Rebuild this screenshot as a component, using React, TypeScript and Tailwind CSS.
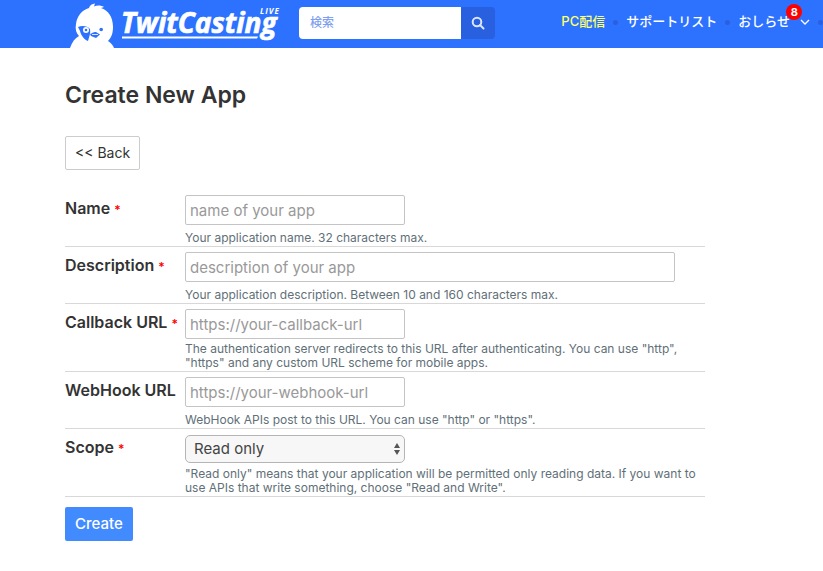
import type { ReactNode } from "react";

type RowProps = {
  id: string;
  label: string;
  required?: boolean;
  hint: string;
  twoLines?: boolean;
  children: ReactNode;
};

function Row({ id, label, required, hint, twoLines, children }: RowProps) {
  return (
    <div className="flex border-b border-[#d8d8d8] pt-[5px] pb-px">
      <label htmlFor={id} className="w-[120px] shrink-0 pt-px text-base leading-6 font-semibold whitespace-nowrap text-[#333]">
        {label}
        {required && <span className="ml-1 text-xs text-[#f00]">*</span>}
      </label>
      <div className="min-w-0 flex-1">
        {children}
        <p className={`text-xs leading-[14px] text-[#5f7078] ${twoLines ? "pt-[3px]" : "pt-1.5"}`}>{hint}</p>
      </div>
    </div>
  );
}

const field =
  "block h-[30px] max-w-full rounded-xs border border-[#c4c4c4] bg-white px-1 text-[15px] text-[#333] placeholder:text-[#999]";

function Logo() {
  return (
    <a href="#" aria-label="TwitCasting LIVE" className="block shrink-0">
      <svg width="216" height="48" viewBox="0 0 216 48" fill="#fff">
        <path d="M2 48C4 42 7 38 11 36C8 33 7 29 8 24C9 16 14 10 21 8C22 5 24 4 27 3.5L26 6.5C29 5 33 5 36 7L33 8C40 10 45 17 45 27C45 34 43 38 40 41C43 43 45 45 46 48Z" />
        <path d="M10 27C14 25 20 26 22 29C23 33 21 37 20 41C17 40 13 36 12 31Z" fill="#2d72ff" />
        <circle cx="18" cy="30" r="3" />
        <circle cx="18" cy="30" r="1.3" fill="#2d72ff" />
        <circle cx="33.2" cy="29.5" r="1.8" fill="#2d72ff" />
        <path d="M22 34C24 33 26 31.5 28 32L32 34.5L28 38L23 36Z" fill="#2d72ff" />
        <path d="M24 34.5L30 34.5" stroke="#fff" strokeWidth="0.8" />
        <text x="53" y="33" fontFamily="'Open Sans', sans-serif" fontStyle="italic" fontWeight="700" fontSize="28" stroke="#fff" strokeWidth="0.7">TwitCasting</text>
        <text x="192" y="14" fontFamily="'Open Sans', sans-serif" fontStyle="italic" fontWeight="700" fontSize="8" letterSpacing="1">LIVE</text>
        <path d="M54 36.5H190L189 38.5H54Z" />
      </svg>
    </a>
  );
}

export default function App() {
  return (
    <div className="font-[Inter,'Noto_Sans_CJK_JP',sans-serif] text-[#333]">
      <header className="flex h-12 items-center overflow-hidden bg-[#2d72ff] pl-[68px]">
        <Logo />
        <form className="ml-[15px] flex h-8 w-[196px] shrink-0 -translate-y-px overflow-hidden rounded-sm" onSubmit={(e) => e.preventDefault()}>
          <input aria-label="検索" placeholder="検索" className="min-w-0 flex-1 bg-white px-[11px] text-xs font-medium text-[#333] placeholder:text-[#7f9ff0]" />
          <button aria-label="検索" className="flex w-[34px] items-center justify-center bg-[#2860e0] text-[#dce6ff]">
            <svg width="14" height="14" viewBox="0 0 14 14" fill="none" stroke="currentColor" strokeWidth="2">
              <circle cx="6" cy="6" r="4.3" />
              <path d="M9 9L12.5 12.5" strokeLinecap="round" />
            </svg>
          </button>
        </form>
        <nav className="-mt-1 ml-auto flex shrink-0 items-center text-[13px] font-medium text-white">
          <a href="#" className="text-[#ffff66]">PC配信</a>
          <i className="mx-2 size-[5px] rounded-full bg-[#2860e0]" />
          <a href="#">サポートリスト</a>
          <i className="mx-2 size-[5px] rounded-full bg-[#2860e0]" />
          <a href="#" className="relative flex items-center">
            おしらせ
            <span className="absolute -top-2 left-12 flex size-4 items-center justify-center rounded-full bg-[#f00] text-[11px] font-bold">8</span>
            <svg className="ml-2.5" width="10" height="6" viewBox="0 0 10 6" fill="none" stroke="#fff" strokeWidth="1.3">
              <path d="M1 1L5 5L9 1" />
            </svg>
          </a>
          <i className="ml-2 size-[5px] rounded-full bg-[#2860e0]" />
        </nav>
      </header>
      <main className="max-w-[705px] pl-[65px] pt-[31px]">
        <h1 className="text-[23px] leading-8 font-semibold">Create New App</h1>
        <button className="mt-[25px] block h-[34px] rounded-xs border border-[#ccc] bg-white px-[9px] text-sm">&lt;&lt; Back</button>
        <form className="mt-5" onSubmit={(e) => e.preventDefault()}>
          <Row id="name" label="Name" required hint="Your application name. 32 characters max.">
            <input id="name" placeholder="name of your app" className={`${field} w-[220px]`} />
          </Row>
          <Row id="description" label="Description" required hint="Your application description. Between 10 and 160 characters max.">
            <input id="description" placeholder="description of your app" className={`${field} w-[490px]`} />
          </Row>
          <Row id="callback" label="Callback URL" required twoLines hint={'The authentication server redirects to this URL after authenticating. You can use "http", "https" and any custom URL scheme for mobile apps.'}>
            <input id="callback" placeholder="https://your-callback-url" className={`${field} w-[220px]`} />
          </Row>
          <Row id="webhook" label="WebHook URL" hint={'WebHook APIs post to this URL. You can use "http" or "https".'}>
            <input id="webhook" placeholder="https://your-webhook-url" className={`${field} w-[220px]`} />
          </Row>
          <Row id="scope" label="Scope" required twoLines hint={'"Read only" means that your application will be permitted only reading data. If you want to use APIs that write something, choose "Read and Write".'}>
            <div className="relative h-[30px] w-[220px] pt-px">
              <select id="scope" className="block h-7 w-full appearance-none rounded-[5px] border border-[#b5b5b5] bg-[#f7f7f7] px-2 text-[15px] text-[#444]">
                <option>Read only</option>
                <option>Read and Write</option>
              </select>
              <svg className="pointer-events-none absolute top-2 right-1" width="8" height="14" viewBox="0 0 8 14" fill="#555">
                <path d="M4 1L7 6H1ZM4 13L1 8H7Z" />
              </svg>
            </div>
          </Row>
          <button className="mt-2.5 block h-[34px] rounded-xs bg-[#428bff] px-2.5 text-[15px] font-medium text-white">Create</button>
        </form>
      </main>
    </div>
  );
}
